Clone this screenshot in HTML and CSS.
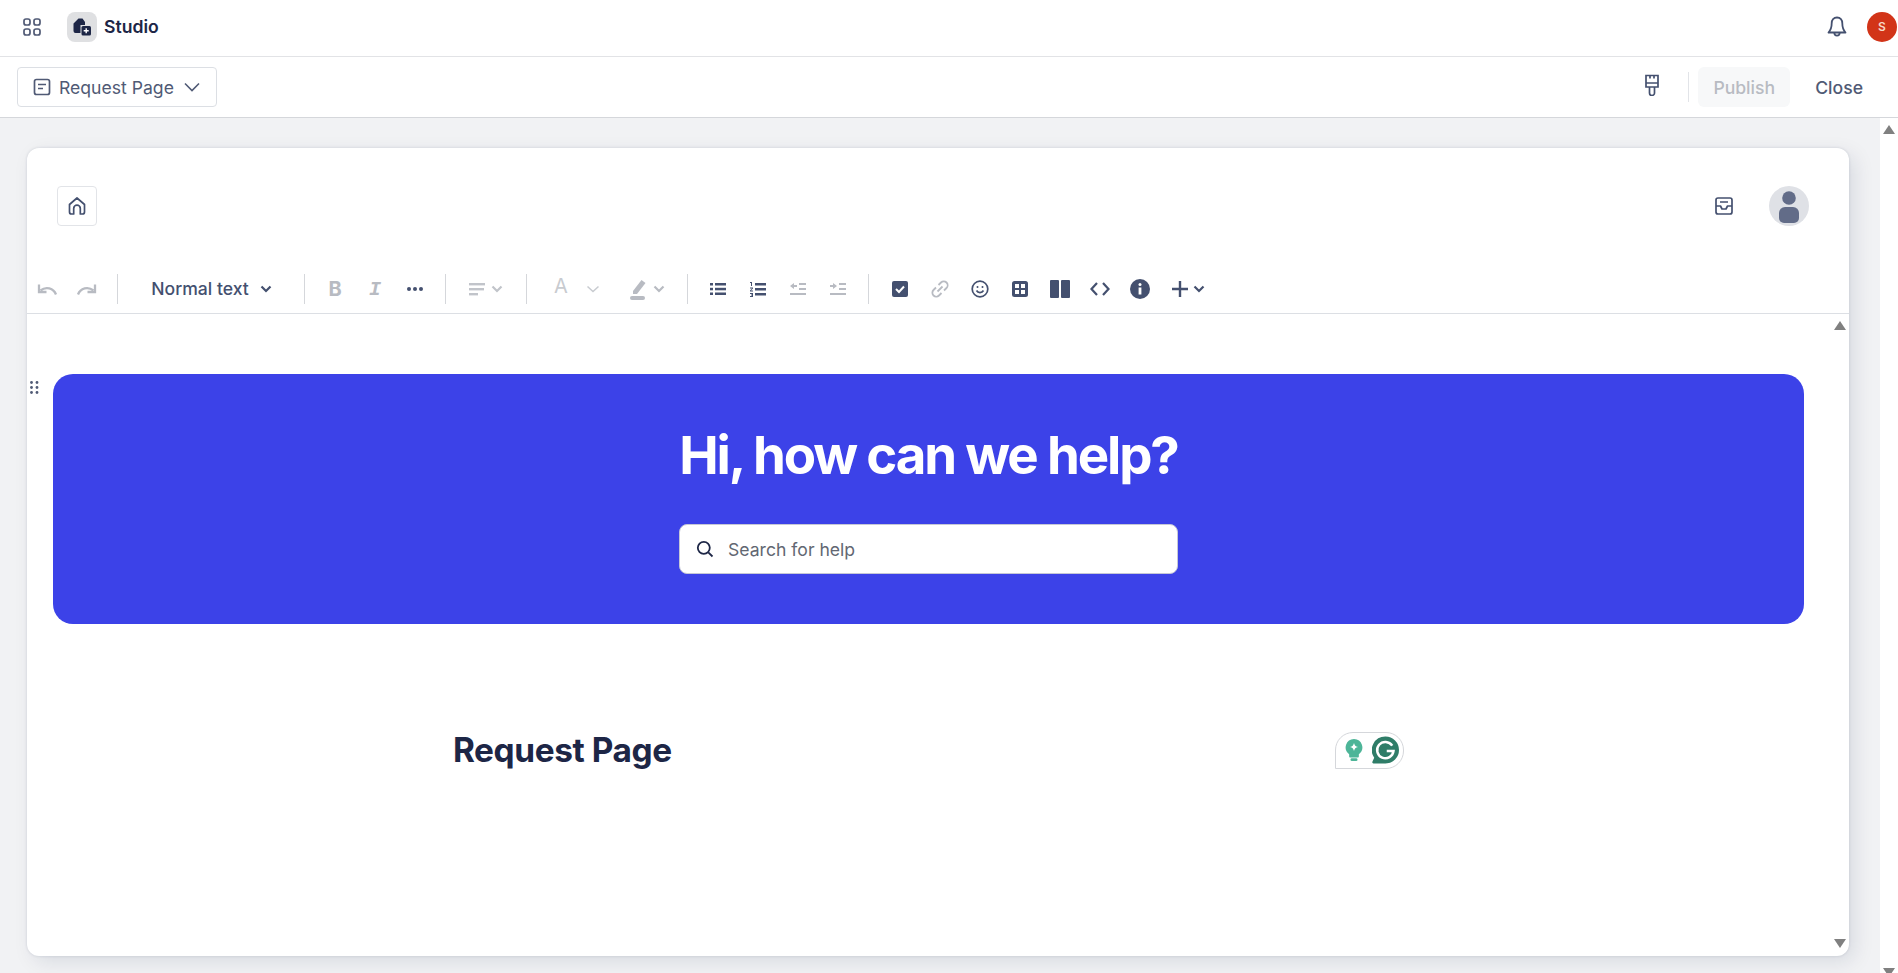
FILE: index.html
```html
<!DOCTYPE html>
<html lang="en">
<head>
  <meta charset="UTF-8">
  <meta name="viewport" content="width=device-width, initial-scale=1.0">
  <title>Studio</title>
  <link rel="stylesheet" href="styles.css">
</head>
<body>
  <header class="topbar">
    <svg class="apps" width="20" height="20" viewBox="0 0 20 20" fill="none" stroke="#505a75" stroke-width="1.7">
      <rect x="2" y="2" width="6" height="6" rx="2"/><rect x="12" y="2" width="6" height="6" rx="2"/>
      <rect x="2" y="12" width="6" height="6" rx="2"/><rect x="12" y="12" width="6" height="6" rx="2"/>
    </svg>
    <div class="logo">
      <svg width="20" height="20" viewBox="0 0 20 20">
        <path d="M1.500 6.500 6.500 1.500h4L13 5v3H8.500v8h-5a2 2 0 0 1-2-2z" fill="#1d2646"/>
        <rect x="9.500" y="9" width="9.500" height="9.500" rx="1.500" fill="#1d2646"/>
        <path d="M14.200 11.200v5M11.700 13.700h5" stroke="#fff" stroke-width="1.400"/>
      </svg>
    </div>
    <span class="app-name">Studio</span>
    <svg class="bell" width="22" height="24" viewBox="0 0 22 24" fill="none" stroke="#44506f" stroke-width="1.800" stroke-linejoin="round">
      <path d="M11 2.500c-3.400 0-5.300 2.600-5.300 5.800 0 5-1 6.800-3.200 9.200h17c-2.200-2.400-3.200-4.200-3.200-9.200 0-3.200-1.900-5.800-5.300-5.800z"/>
      <path d="M8.300 17.500c0 2 1 3.200 2.700 3.200s2.700-1.200 2.700-3.200"/>
    </svg>
    <div class="user-badge">S</div>
  </header>

  <div class="actionbar">
    <button class="page-select">
      <svg width="18" height="18" viewBox="0 0 18 18" fill="none" stroke="#505a75" stroke-width="1.700">
        <rect x="1.500" y="1.500" width="15" height="15" rx="2"/><path d="M5 6.500h8M5 10.500h5"/>
      </svg>
      <span>Request Page</span>
      <svg width="18" height="18" viewBox="0 0 18 18" fill="none" stroke="#505a75" stroke-width="1.600"><path d="M2 5.500l7 7 7-7"/></svg>
    </button>
    <svg class="brush" width="16" height="22" viewBox="0 0 16 22" fill="none" stroke="#44506f" stroke-width="1.700">
      <path d="M2 1.500h12v11.500H2zM2 9h12M6 1.500v3M10 1.500v3"/>
      <path d="M5.500 13v6a2.500 2.500 0 0 0 5 0v-6"/>
    </svg>
    <div class="action-sep"></div>
    <button class="publish">Publish</button>
    <button class="close">Close</button>
  </div>

  <div class="workspace">
    <main class="stage">
      <section class="card">
        <div class="card-head">
          <button class="home">
            <svg width="20" height="20" viewBox="0 0 20 20" fill="none" stroke="#44506f" stroke-width="1.700" stroke-linejoin="round">
              <path d="M2.500 8.500 10 2l7.500 6.500V16a2 2 0 0 1-2 2h-2.200v-5.500a3.300 3.300 0 0 0-6.600 0V18H4.500a2 2 0 0 1-2-2z"/>
            </svg>
          </button>
          <div class="head-right">
            <svg width="18" height="18" viewBox="0 0 18 18" fill="none" stroke="#44506f" stroke-width="1.700" stroke-linejoin="round">
              <rect x="1" y="1" width="16" height="16" rx="2"/>
              <path d="M1 9h4.500l1.500 3h4l1.500-3H17M5 5h8"/>
            </svg>
            <div class="head-avatar">
              <svg width="40" height="40" viewBox="0 0 40 40" fill="#626c88">
                <circle cx="20" cy="12" r="6.800"/>
                <path d="M10 27a6 6 0 0 1 6-6h8a6 6 0 0 1 6 6v5a5 5 0 0 1-5 5H15a5 5 0 0 1-5-5z"/>
              </svg>
            </div>
          </div>
        </div>

        <div class="toolbar">
          <button class="tool">
            <svg width="22" height="16" viewBox="0 0 22 16" fill="none" stroke="#b8bbc2" stroke-width="2.300"><path d="M20 13.500C17.500 7 10 5 4.500 9.500"/><path d="M3 3.500v7.500h7.500"/></svg>
          </button>
          <button class="tool">
            <svg width="22" height="16" viewBox="0 0 22 16" fill="none" stroke="#b8bbc2" stroke-width="2.300"><path d="M2 13.500C4.500 7 12 5 17.500 9.500"/><path d="M19 3.500v7.500h-7.500"/></svg>
          </button>
          <div class="sep"></div>
          <button class="tool text-style">Normal text
            <svg class="chev" width="12" height="8" viewBox="0 0 12 8" fill="none" stroke="#44506f" stroke-width="2.200"><path d="M1.500 1.500 6 6l4.500-4.500"/></svg>
          </button>
          <div class="sep"></div>
          <button class="tool letter bold">B</button>
          <button class="tool letter italic">I</button>
          <button class="tool">
            <svg width="16" height="4" viewBox="0 0 16 4" fill="#44506f"><circle cx="2" cy="2" r="2"/><circle cx="8" cy="2" r="2"/><circle cx="14" cy="2" r="2"/></svg>
          </button>
          <div class="sep"></div>
          <button class="tool align">
            <svg width="16" height="14" viewBox="0 0 16 14" fill="#c1c4ca"><rect y="1" width="16" height="2.400"/><rect y="6" width="15" height="2.400"/><rect y="11" width="9" height="2.400"/></svg>
            <svg class="chev" width="12" height="8" viewBox="0 0 12 8" fill="none" stroke="#c1c4ca" stroke-width="2.200"><path d="M1.500 1.500 6 6l4.500-4.500"/></svg>
          </button>
          <div class="sep"></div>
          <button class="tool color-a">
            <span class="letter-a">A</span>
            <svg class="chev" width="14" height="8" viewBox="0 0 14 8" fill="none" stroke="#c8cbd0" stroke-width="1.500"><path d="M1.500 1.500 7 6.500l5.500-5"/></svg>
          </button>
          <button class="tool color-b">
            <svg width="20" height="24" viewBox="0 0 20 24" fill="#b8bbc2"><path d="m4 14 8.500-11 4 3-8.500 11H4z"/><rect x="1" y="19" width="15" height="4" rx="2"/></svg>
            <svg class="chev" width="12" height="8" viewBox="0 0 12 8" fill="none" stroke="#b8bbc2" stroke-width="2.200"><path d="M1.500 1.500 6 6l4.500-4.500"/></svg>
          </button>
          <div class="sep"></div>
          <button class="tool">
            <svg width="16" height="14" viewBox="0 0 16 14" fill="#44506f"><rect y="1" width="3" height="2.500"/><rect x="5" y="1" width="11" height="2.500"/><rect y="5.800" width="3" height="2.500"/><rect x="5" y="5.800" width="11" height="2.500"/><rect y="10.500" width="3" height="2.500"/><rect x="5" y="10.500" width="11" height="2.500"/></svg>
          </button>
          <button class="tool">
            <svg width="16" height="15" viewBox="0 0 16 15" fill="#44506f"><path d="M0 0h2v4H1V1H0zM0 5.500h3v1L1 8.500h2v1H0v-1L2 6.500H0zM0 11h3v4H0v-1h2v-.5H1v-1h1V12H0z"/><rect x="5" y="1" width="11" height="2.500"/><rect x="5" y="6" width="11" height="2.500"/><rect x="5" y="11" width="11" height="2.500"/></svg>
          </button>
          <button class="tool">
            <svg width="16" height="14" viewBox="0 0 16 14" fill="#b8bbc2"><path d="M0 4 4 1v2h3v2H4v2z"/><rect x="9" y="1" width="7" height="2"/><rect x="9" y="6" width="7" height="2"/><rect y="11" width="16" height="2"/></svg>
          </button>
          <button class="tool">
            <svg width="16" height="14" viewBox="0 0 16 14" fill="#b8bbc2"><path d="M7 4 3 1v2H0v2h3v2z"/><rect x="9" y="1" width="7" height="2"/><rect x="9" y="6" width="7" height="2"/><rect y="11" width="16" height="2"/></svg>
          </button>
          <div class="sep last"></div>
          <button class="tool">
            <svg width="16" height="16" viewBox="0 0 16 16"><rect width="16" height="16" rx="2" fill="#44506f"/><path d="m4 8 3 3 5-5.500" fill="none" stroke="#fff" stroke-width="2"/></svg>
          </button>
          <button class="tool">
            <svg width="18" height="18" viewBox="0 0 18 18" fill="none" stroke="#b8bbc2" stroke-width="1.800"><path d="M7.500 5 10 2.500a3.200 3.200 0 0 1 5.500 5.500L13 10.500"/><path d="M10.500 13 8 15.500A3.200 3.200 0 0 1 2.500 10L5 7.500"/><path d="m6.500 11.500 5-5"/></svg>
          </button>
          <button class="tool">
            <svg width="18" height="18" viewBox="0 0 18 18" fill="none" stroke="#44506f" stroke-width="1.700"><circle cx="9" cy="9" r="7.800"/><path d="M5.500 10.500c1.500 2.700 5.500 2.700 7 0"/><circle cx="6.500" cy="7" r="1" fill="#44506f" stroke="none"/><circle cx="11.500" cy="7" r="1" fill="#44506f" stroke="none"/></svg>
          </button>
          <button class="tool">
            <svg width="16" height="16" viewBox="0 0 16 16"><rect width="16" height="16" rx="2.500" fill="#44506f"/><path d="M3 3h4v4H3zM9 3h4v4H9zM3 9h4v4H3zM9 9h4v4H9z" fill="#fff"/></svg>
          </button>
          <button class="tool">
            <svg width="20" height="18" viewBox="0 0 20 18" fill="#44506f"><rect width="9" height="18" rx="1"/><rect x="11" width="9" height="18" rx="1"/></svg>
          </button>
          <button class="tool">
            <svg width="20" height="14" viewBox="0 0 20 14" fill="none" stroke="#44506f" stroke-width="2.200"><path d="M7 1 1.500 7 7 13M13 1l5.500 6L13 13"/></svg>
          </button>
          <button class="tool">
            <svg width="20" height="20" viewBox="0 0 20 20"><circle cx="10" cy="10" r="10" fill="#44506f"/><circle cx="10" cy="5.500" r="1.500" fill="#fff"/><rect x="8.600" y="8.500" width="2.800" height="7" fill="#fff"/></svg>
          </button>
          <button class="tool plus">
            <svg width="16" height="16" viewBox="0 0 16 16" fill="none" stroke="#44506f" stroke-width="2.400"><path d="M8 0v16M0 8h16"/></svg>
            <svg class="chev" width="12" height="8" viewBox="0 0 12 8" fill="none" stroke="#44506f" stroke-width="2.200"><path d="M1.500 1.500 6 6l4.500-4.500"/></svg>
          </button>
        </div>

        <div class="editor">
          <svg class="drag" width="9" height="13" viewBox="0 0 9 13" fill="#505a75">
            <circle cx="1.500" cy="1.500" r="1.400"/><circle cx="7" cy="1.500" r="1.400"/>
            <circle cx="1.500" cy="6.500" r="1.400"/><circle cx="7" cy="6.500" r="1.400"/>
            <circle cx="1.500" cy="11.500" r="1.400"/><circle cx="7" cy="11.500" r="1.400"/>
          </svg>
          <div class="hero">
            <h1>Hi, how can we help?</h1>
            <div class="search">
              <svg width="18" height="18" viewBox="0 0 18 18" fill="none" stroke="#1d2646" stroke-width="1.800"><circle cx="7.800" cy="7.800" r="6"/><path d="m12.300 12.300 4.200 4.200"/></svg>
              <span>Search for help</span>
            </div>
          </div>
          <div class="page-title">
            <h2>Request Page</h2>
            <div class="grammarly">
              <svg width="18" height="22" viewBox="0 0 20 25">
                <path d="M10 0a9.500 9.500 0 0 0-5.500 17.200V20a1 1 0 0 0 1 1h9a1 1 0 0 0 1-1v-2.800A9.500 9.500 0 0 0 10 0z" fill="#4db598"/>
                <path d="M10 4.500c.7 2.800 1.700 3.800 4.500 4.500-2.800.7-3.800 1.700-4.500 4.500-.7-2.800-1.700-3.800-4.500-4.500 2.800-.7 3.800-1.700 4.500-4.500z" fill="#fff"/>
                <rect x="6" y="22" width="8" height="3" rx="1.500" fill="#4db598"/>
              </svg>
              <svg width="27" height="28" viewBox="0 0 28 28">
                <path d="M14 0a14 14 0 1 1 0 28H1.500c-1 0-1.500-1-1-2l1.800-4A14 14 0 0 1 14 0z" fill="#2f7d68"/>
                <path d="M21 9.500A8.500 8.500 0 1 0 22.300 15h-7" fill="none" stroke="#fff" stroke-width="2.600"/>
              </svg>
            </div>
          </div>
          <div class="inner-scroll">
            <i class="arrow up"></i>
            <i class="arrow down"></i>
          </div>
        </div>
      </section>
    </main>
    <aside class="page-scroll">
      <i class="arrow up"></i>
      <i class="arrow down"></i>
    </aside>
  </div>
</body>
</html>
```

FILE: styles.css
```css
* {
  box-sizing: border-box;
}
html, body {
  height: 100%;
}
body {
  margin: 0;
  height: 973px;
  overflow: hidden;
  display: flex;
  flex-direction: column;
  font-family: Inter, "Liberation Sans", sans-serif;
  color: #44506f;
  background: #fff;
}
button {
  font-family: inherit;
  background: none;
  border: none;
  padding: 0;
}
svg {
  display: block;
  flex-shrink: 0;
}

.topbar {
  height: 57px;
  flex-shrink: 0;
  display: flex;
  align-items: center;
  padding: 0 1px 3px 22px;
  border-bottom: 1px solid #e2e3e6;
}
.logo {
  width: 30px;
  height: 30px;
  margin-left: 25px;
  border-radius: 8px;
  background: #dfe0e2;
  display: flex;
  align-items: center;
  justify-content: center;
}
.app-name {
  margin-left: 7px;
  font-size: 17.6px;
  font-weight: 600;
  color: #1d2646;
}
.bell {
  margin-left: auto;
}
.user-badge {
  width: 30px;
  height: 30px;
  margin-left: 19px;
  border-radius: 50%;
  background: #d23418;
  color: #f6d9c8;
  font-size: 12px;
  font-weight: 600;
  display: flex;
  align-items: center;
  justify-content: center;
}

.actionbar {
  height: 61px;
  flex-shrink: 0;
  display: flex;
  align-items: center;
  padding: 0 35px 0 17px;
  border-bottom: 1px solid #d5d7db;
}
.page-select {
  width: 200px;
  height: 40px;
  display: flex;
  align-items: center;
  padding: 0 15px;
  gap: 8px;
  border: 1px solid #dcdfe4;
  border-radius: 4px;
  font-size: 17.6px;
  color: #505a75;
}
.page-select span {
  flex: 1;
  text-align: left;
  white-space: nowrap;
}
.brush {
  margin-left: auto;
  margin-bottom: 4px;
}
.action-sep {
  width: 1px;
  height: 30px;
  margin-left: 28px;
  background: #e2e4e8;
}
.publish {
  width: 92px;
  height: 40px;
  margin-left: 9px;
  border-radius: 6px;
  background: #f7f8f9;
  color: #b8bbc2;
  font-size: 17.6px;
  font-weight: 500;
}
.close {
  margin-left: 25px;
  color: #505a75;
  font-size: 17.6px;
  font-weight: 500;
}

.workspace {
  flex: 1;
  min-height: 0;
  display: flex;
}
.stage {
  flex: 1;
  padding: 30px 31px 17px 27px;
  background: #f1f2f4;
}
.page-scroll {
  width: 18px;
  background: #fff;
  display: flex;
  flex-direction: column;
  justify-content: space-between;
  align-items: center;
  padding: 7px 0 0;
}
.arrow {
  display: block;
  width: 0;
  height: 0;
  border-left: 6px solid transparent;
  border-right: 6px solid transparent;
}
.arrow.up {
  border-bottom: 9px solid #808080;
}
.arrow.down {
  border-top: 9px solid #808080;
}
.page-scroll .arrow.down {
  margin-bottom: -4px;
}

.card {
  height: 100%;
  display: flex;
  flex-direction: column;
  background: #fff;
  border-radius: 12px;
  box-shadow: 0 0 3px rgba(9, 30, 66, 0.14), 6px 6px 20px rgba(9, 30, 66, 0.1);
  overflow: hidden;
}
.card-head {
  height: 122px;
  flex-shrink: 0;
  display: flex;
  justify-content: space-between;
  align-items: flex-start;
  padding: 38px 40px 0 30px;
}
.home {
  width: 40px;
  height: 40px;
  display: flex;
  align-items: center;
  justify-content: center;
  border: 1px solid #e2e4e8;
  border-radius: 4px;
}
.head-right {
  display: flex;
  align-items: center;
  gap: 36px;
}
.head-avatar {
  width: 40px;
  height: 40px;
  border-radius: 50%;
  background: #dfe1e6;
  overflow: hidden;
}

.toolbar {
  height: 44px;
  flex-shrink: 0;
  display: flex;
  align-items: center;
  padding-bottom: 5px;
  border-bottom: 1px solid #dcdfe4;
}
.tool {
  width: 40px;
  height: 30px;
  flex-shrink: 0;
  display: flex;
  align-items: center;
  justify-content: center;
  color: #44506f;
}
.sep {
  width: 1px;
  height: 30px;
  margin: 0 10px;
  background: #d5d7db;
  flex-shrink: 0;
}
.sep.last {
  margin-right: 11px;
}
.tool.text-style {
  width: 166px;
  gap: 11px;
  padding: 0 0 1px 1px;
  font-size: 17.6px;
  font-weight: 500;
  white-space: nowrap;
}
.tool.align {
  width: 60px;
  gap: 6px;
}
.tool.color-a {
  width: 80px;
  gap: 18px;
}
.letter-a {
  font-size: 20px;
  color: #c8cbd0;
  margin-bottom: 6px;
}
.tool.color-b {
  width: 60px;
  gap: 4px;
}
.tool.plus {
  width: 60px;
  justify-content: flex-start;
  gap: 5px;
  padding-left: 12px;
}
.letter {
  font-size: 20px;
  color: #b8bbc2;
}
.letter.bold {
  font-weight: 700;
}
.letter.italic {
  font-style: italic;
  font-family: "Liberation Mono", monospace;
  font-weight: 700;
}

.editor {
  flex: 1;
  min-height: 0;
  position: relative;
  padding: 60px 45px 0 26px;
}
.drag {
  position: absolute;
  left: 3px;
  top: 67px;
}
.hero {
  height: 250px;
  display: flex;
  flex-direction: column;
  align-items: center;
  background: #3c42e8;
  border-radius: 20px;
  padding-top: 48px;
}
.hero h1 {
  margin: 0;
  color: #fff;
  font-size: 52.8px;
  line-height: 66px;
  font-weight: 700;
  letter-spacing: -2.15px;
}
.search {
  width: 499px;
  height: 50px;
  margin-top: 36px;
  display: flex;
  align-items: center;
  gap: 14px;
  padding: 0 16px;
  background: #fff;
  border: 1px solid #c5c7d6;
  border-radius: 8px;
  font-size: 17.6px;
  color: #626772;
}
.page-title {
  display: flex;
  align-items: center;
  padding: 106px 0 0 400px;
}
.page-title h2 {
  margin: 0;
  width: 882px;
  font-size: 33.4px;
  line-height: 40px;
  font-weight: 700;
  color: #1d2646;
  letter-spacing: -0.4px;
}
.grammarly {
  width: 69px;
  height: 37px;
  display: flex;
  align-items: center;
  gap: 9px;
  padding-left: 9px;
  border: 1px solid #d5d7db;
  border-radius: 18px 18px 18px 0;
}
.inner-scroll {
  position: absolute;
  top: 0;
  right: 0;
  bottom: 0;
  width: 18px;
  display: flex;
  flex-direction: column;
  justify-content: space-between;
  align-items: center;
  padding: 7px 0 8px;
}
```
